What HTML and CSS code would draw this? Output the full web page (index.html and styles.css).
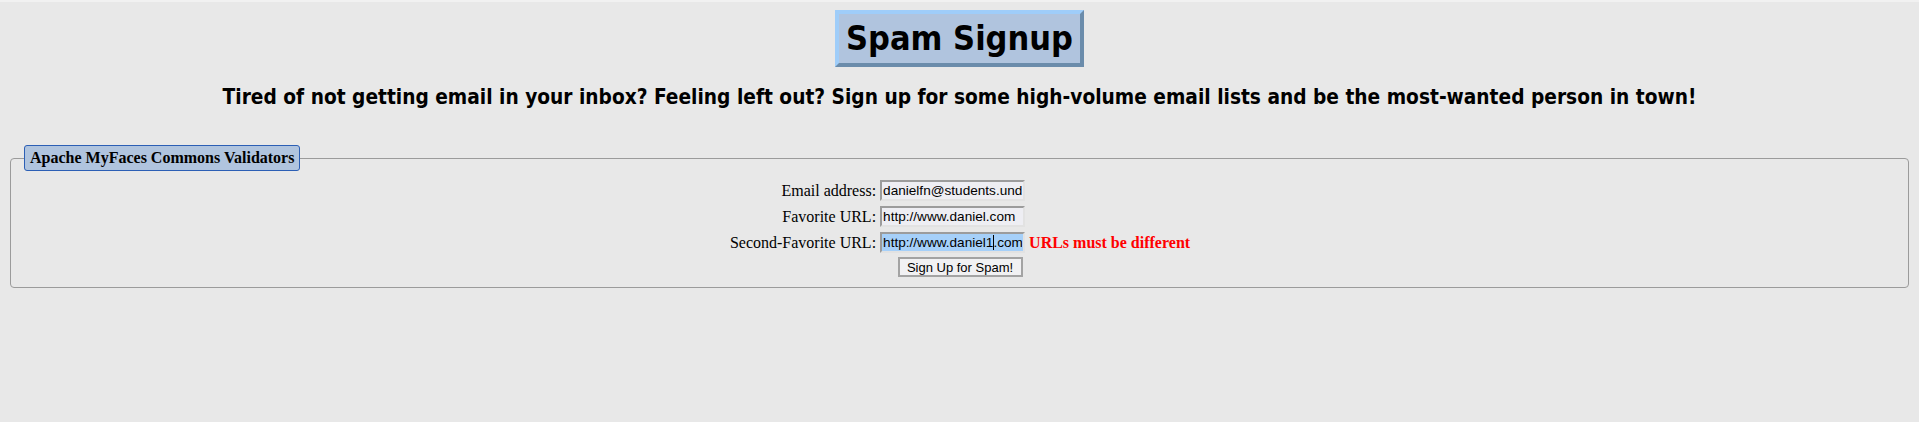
FILE: index.html
```html
<!DOCTYPE html>
<html>
<head>
<meta charset="utf-8">
<title>Spam Signup</title>
<link rel="stylesheet" href="styles.css">
</head>
<body>
<div class="page">
  <div class="header"><h1 class="title">Spam Signup</h1></div>
  <h2 class="tagline">Tired of not getting email in your inbox? Feeling left out? Sign up for some high-volume email lists and be the most-wanted person in town!</h2>
  <fieldset class="box">
    <legend class="box-legend">Apache MyFaces Commons Validators</legend>
    <table class="form">
      <tr>
        <td class="label">Email address:</td>
        <td class="field"><input class="text-input" type="text" value="danielfn@students.undip.ac.id"></td>
        <td class="msg"></td>
      </tr>
      <tr>
        <td class="label">Favorite URL:</td>
        <td class="field"><input class="text-input" type="text" value="http://www.daniel.com"></td>
        <td class="msg"></td>
      </tr>
      <tr>
        <td class="label">Second-Favorite URL:</td>
        <td class="field"><span class="caret-wrap"><input class="text-input selected" type="text" value="http://www.daniel1.com"></span></td>
        <td class="msg error">URLs must be different</td>
      </tr>
    </table>
    <div class="actions"><button class="submit" type="button">Sign Up for Spam!</button></div>
  </fieldset>
</div>
</body>
</html>
```

FILE: styles.css
```css
html, body {
  margin: 0;
  padding: 0;
  background: #e8e8e8;
}
body {
  border-top: 2px solid #f1f1f1;
  font-family: "Liberation Serif", serif;
  color: #000;
}
.page {
  padding: 8px 8px 0;
}
.header {
  display: flex;
  justify-content: center;
}
.title {
  margin: 0;
  font-family: "DejaVu Sans Condensed", "DejaVu Sans", sans-serif;
  font-stretch: condensed;
  font-weight: bold;
  font-size: 34px;
  line-height: 49px;
  padding: 0 7px;
  background: #b0c4de;
  border: 4px solid;
  border-color: #9fcdf9 #6b8cab #6b8cab #9fcdf9;
  color: #000;
}
.tagline {
  margin: 18px 0 35px;
  text-align: center;
  font-family: "DejaVu Sans Condensed", "DejaVu Sans", sans-serif;
  font-stretch: condensed;
  font-weight: bold;
  font-size: 20.7px;
  line-height: 25px;
}
.box {
  margin: 0 2px;
  padding: 5px 12px 10px 13px;
  border: 1px solid #9b9b9b;
  border-radius: 4px;
}
.box-legend {
  padding: 3px 5px;
  background: #b0c4de;
  border: 1px solid #2c5fb5;
  border-radius: 3px;
  font-family: "Liberation Serif", serif;
  font-weight: bold;
  font-size: 16px;
  line-height: 18px;
}
.form {
  margin: 0 auto;
  border-collapse: separate;
  border-spacing: 2px 3px;
}
.form td {
  padding: 1px;
  font-size: 16px;
  line-height: 18px;
  vertical-align: middle;
}
.label {
  text-align: right;
  white-space: nowrap;
}
.msg {
  text-align: left;
  white-space: nowrap;
}
.error {
  color: #ff0000;
  font-weight: bold;
}
.text-input {
  display: block;
  box-sizing: border-box;
  width: 145px;
  height: 21px;
  margin: 0;
  padding: 0 1px;
  border: 2px solid;
  border-color: #9c9c9c #e2e2e2 #e2e2e2 #9c9c9c;
  background: #eeeef3;
  font-family: "Liberation Sans", sans-serif;
  font-size: 13.6px;
  color: #000;
  outline: none;
}
.text-input.selected {
  background: #a6d0f9;
}
.caret-wrap {
  position: relative;
  display: block;
}
.caret-wrap::after {
  content: "";
  position: absolute;
  left: 113px;
  top: 3px;
  width: 1px;
  height: 15px;
  background: #000;
}
.actions {
  display: flex;
  justify-content: center;
}
.submit {
  box-sizing: border-box;
  width: 125px;
  height: 20px;
  margin: 0;
  padding: 0;
  border: 2px solid #a3a3a3;
  background: #f1f1f3;
  font-family: "Liberation Sans", sans-serif;
  font-size: 13px;
  color: #000;
}
```
